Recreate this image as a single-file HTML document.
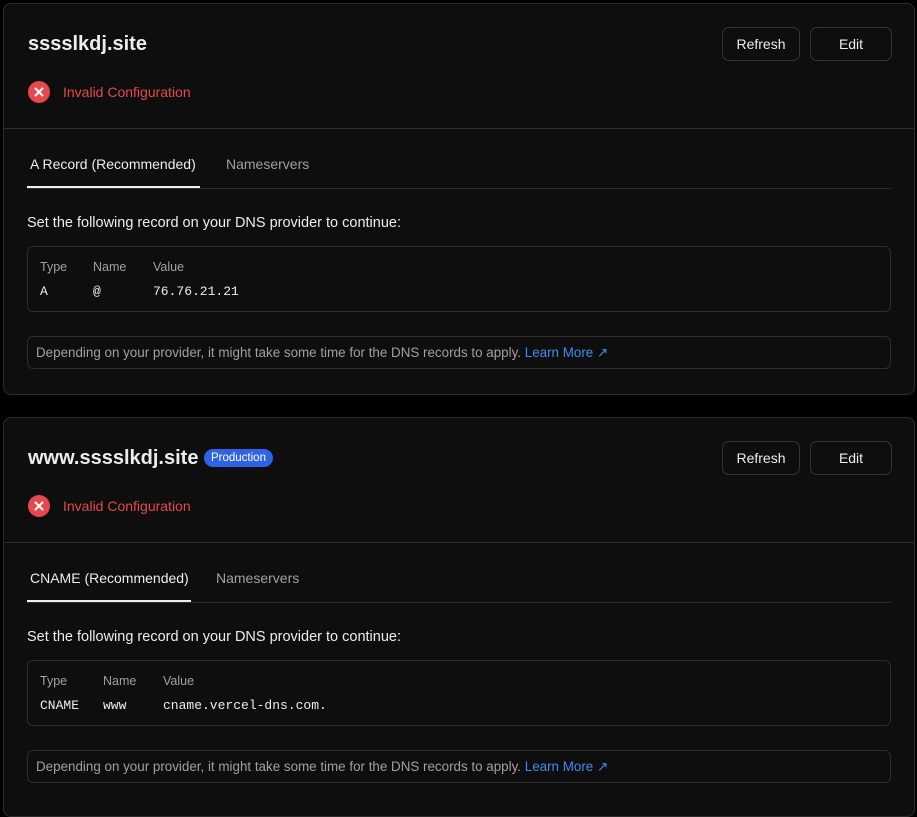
<!DOCTYPE html>
<html><head><style>
*{box-sizing:border-box;margin:0;padding:0}
body{width:917px;height:809px;background:#000;font-family:"Liberation Sans",sans-serif;color:#ededed;position:relative;overflow:hidden}
.card{position:absolute;left:3px;width:912px;background:#0e0e0e;border:1px solid #2c2c2c;border-radius:8px}
.abs{position:absolute}
.title{font-size:20px;font-weight:bold;left:24px;top:29px;color:#ededed}
.btn{position:absolute;top:23px;height:34px;border:1px solid #333;border-radius:7px;font-size:14px;display:flex;align-items:center;justify-content:center;color:#ededed}
.ic{left:24px;top:77px;width:22px;height:22px;border-radius:50%;background:#e5484d}
.err{left:59px;top:80px;font-size:14px;color:#e5484d}
.div{left:0;right:0;top:124px;height:1px;background:#2c2c2c}
.tab{top:152px;font-size:14px}
.tl{left:23px;width:864px;top:184px;height:1px;background:#2c2c2c}
.ul{left:23px;top:182px;height:2px;background:#ededed}
.set{left:23px;top:211px;font-size:14.5px}
.tbl{left:23px;width:864px;top:242px;height:66px;border:1px solid #2c2c2c;border-radius:6px}
.h{top:13px;font-size:12.5px;color:#a0a0a0}
.v{top:37px;font-family:"Liberation Mono",monospace;font-size:13px}
.note{left:23px;width:864px;top:332px;height:33px;border:1px solid #2c2c2c;border-radius:6px;font-size:13.4px;color:#a0a0a0;padding:8px 0 0 8px;white-space:nowrap}
.note span{color:#3e8cf0}
.badge{background:#2f63e6;color:#fff;font-size:11.5px;border-radius:10px;padding:3px 7px;top:31px}
</style></head><body>
<div class="card" style="top:3px;height:392px">
<div class="abs title">sssslkdj.site</div>
<div class="btn" style="left:718px;width:78px">Refresh</div>
<div class="btn" style="left:806px;width:82px">Edit</div>
<div class="abs ic"><svg width="22" height="22"><path d="M7.5 7.5L14.5 14.5M14.5 7.5L7.5 14.5" stroke="#fff" stroke-width="2" stroke-linecap="round"/></svg></div>
<div class="abs err">Invalid Configuration</div>
<div class="abs div"></div>
<div class="abs tab" style="left:26px">A Record (Recommended)</div>
<div class="abs tab" style="left:222px;color:#a0a0a0">Nameservers</div>
<div class="abs tl"></div><div class="abs ul" style="width:173px"></div>
<div class="abs set">Set the following record on your DNS provider to continue:</div>
<div class="abs tbl">
<div class="abs h" style="left:12px">Type</div><div class="abs h" style="left:65px">Name</div><div class="abs h" style="left:125px">Value</div>
<div class="abs v" style="left:12px">A</div><div class="abs v" style="left:65px">@</div><div class="abs v" style="left:125px">76.76.21.21</div>
</div>
<div class="abs note">Depending on your provider, it might take some time for the DNS records to apply. <span>Learn More ↗</span></div>
</div>
<div class="card" style="top:417px;height:400px">
<div class="abs title">www.sssslkdj.site</div>
<div class="abs badge" style="left:200px">Production</div>
<div class="btn" style="left:718px;width:78px">Refresh</div>
<div class="btn" style="left:806px;width:82px">Edit</div>
<div class="abs ic"><svg width="22" height="22"><path d="M7.5 7.5L14.5 14.5M14.5 7.5L7.5 14.5" stroke="#fff" stroke-width="2" stroke-linecap="round"/></svg></div>
<div class="abs err">Invalid Configuration</div>
<div class="abs div"></div>
<div class="abs tab" style="left:26px">CNAME (Recommended)</div>
<div class="abs tab" style="left:212px;color:#a0a0a0">Nameservers</div>
<div class="abs tl"></div><div class="abs ul" style="width:164px"></div>
<div class="abs set">Set the following record on your DNS provider to continue:</div>
<div class="abs tbl">
<div class="abs h" style="left:12px">Type</div><div class="abs h" style="left:75px">Name</div><div class="abs h" style="left:135px">Value</div>
<div class="abs v" style="left:12px">CNAME</div><div class="abs v" style="left:75px">www</div><div class="abs v" style="left:135px">cname.vercel-dns.com.</div>
</div>
<div class="abs note">Depending on your provider, it might take some time for the DNS records to apply. <span>Learn More ↗</span></div>
</div>
</body></html>
